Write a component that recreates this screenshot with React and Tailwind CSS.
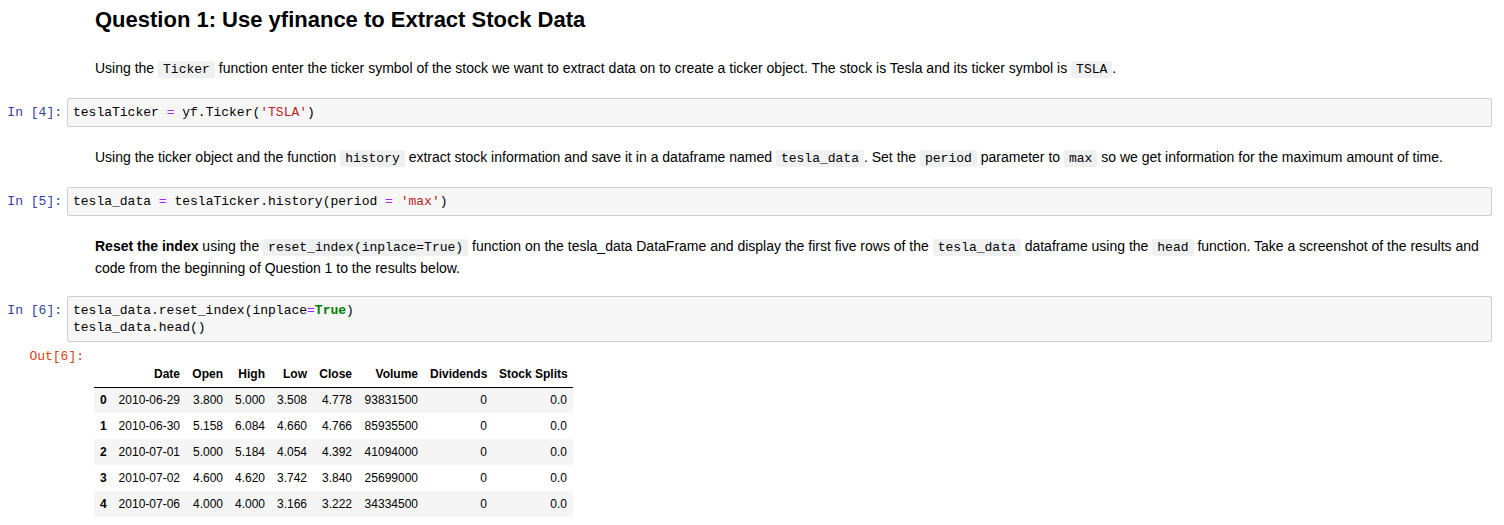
import React from "react";

const mono = "font-['Liberation_Mono','DejaVu_Sans_Mono',monospace]";

// inline code chip used inside markdown text
function Code({ children }) {
  return (
    <code className={`${mono} text-[13px] bg-[#eff0f1] px-[5px] py-[1px] rounded-[2px]`}>
      {children}
    </code>
  );
}

function CodeCell({ n, children }) {
  return (
    <div className="flex items-start">
      <div className={`${mono} w-[67px] shrink-0 pr-[5px] pt-[6px] text-right text-[13px] leading-[17px] text-[#303f9f]`}>
        In&nbsp;[{n}]:
      </div>
      <div className="w-[1425px] border border-[#cfcfcf] rounded-[2px] bg-[#f7f7f7] px-[5px] py-[5px]">
        <pre className={`${mono} text-[13px] leading-[17px] text-black`}>{children}</pre>
      </div>
    </div>
  );
}

const Op = ({ children }) => <span className="text-[#aa22ff]">{children}</span>;
const Str = ({ children }) => <span className="text-[#ba2121]">{children}</span>;
const Kw = ({ children }) => <span className="text-[#008000] font-bold">{children}</span>;

const rows = [
  ["2010-06-29", "3.800", "5.000", "3.508", "4.778", "93831500", "0", "0.0"],
  ["2010-06-30", "5.158", "6.084", "4.660", "4.766", "85935500", "0", "0.0"],
  ["2010-07-01", "5.000", "5.184", "4.054", "4.392", "41094000", "0", "0.0"],
  ["2010-07-02", "4.600", "4.620", "3.742", "3.840", "25699000", "0", "0.0"],
  ["2010-07-06", "4.000", "4.000", "3.166", "3.222", "34334500", "0", "0.0"],
];

const headers = ["Date", "Open", "High", "Low", "Close", "Volume", "Dividends", "Stock Splits"];

export default function App() {
  return (
    <div className="w-[1504px] h-[525px] overflow-hidden bg-white text-black text-[14px] font-['Liberation_Sans',Arial,sans-serif]">
      {/* Markdown heading */}
      <div className="pl-[95px] pt-[7px]">
        <h2 className="text-[22px] leading-[26px] font-bold">Question 1: Use yfinance to Extract Stock Data</h2>
      </div>

      <p className="pl-[95px] mt-[25px] leading-[20px]">
        Using the <Code>Ticker</Code> function enter the ticker symbol of the stock we want to extract data on to create a
        ticker object. The stock is Tesla and its ticker symbol is <Code>TSLA</Code>.
      </p>

      <div className="mt-[18px]">
        <CodeCell n={4}>
          teslaTicker <Op>=</Op> yf.Ticker(<Str>'TSLA'</Str>)
        </CodeCell>
      </div>

      <p className="pl-[95px] mt-[20px] leading-[20px]">
        Using the ticker object and the function <Code>history</Code> extract stock information and save it in a dataframe
        named <Code>tesla_data</Code>. Set the <Code>period</Code> parameter to <Code>max</Code> so we get information for
        the maximum amount of time.
      </p>

      <div className="mt-[18px]">
        <CodeCell n={5}>
          tesla_data <Op>=</Op> teslaTicker.history(period <Op>=</Op> <Str>'max'</Str>)
        </CodeCell>
      </div>

      <p className="pl-[95px] mt-[20px] leading-[21px]">
        <b>Reset the index</b> using the <Code>reset_index(inplace=True)</Code> function on the tesla_data DataFrame and
        display the first five rows of the <Code>tesla_data</Code> dataframe using the <Code>head</Code> function. Take a
        screenshot of the results and
        <br />
        code from the beginning of Question 1 to the results below.
      </p>

      <div className="mt-[17px]">
        <CodeCell n={6}>
          tesla_data.reset_index(inplace<Op>=</Op><Kw>True</Kw>)
          {"\n"}tesla_data.head()
        </CodeCell>
      </div>

      {/* Output area */}
      <div className="flex items-start mt-[4px]">
        <div className={`${mono} w-[84px] shrink-0 pt-[2px] text-right text-[13px] leading-[17px] text-[#d84315]`}>
          Out[6]:
        </div>
        <div className="pl-[10px] pt-[15px]">
          <table className="table-fixed border-collapse text-[12px] w-[479px]">
            <colgroup>
              <col className="w-[18px]" />
              <col className="w-[74px]" />
              <col className="w-[43px]" />
              <col className="w-[42px]" />
              <col className="w-[42px]" />
              <col className="w-[45px]" />
              <col className="w-[66px]" />
              <col className="w-[69px]" />
              <col className="w-[80px]" />
            </colgroup>
            <thead className="border-b border-black">
              <tr>
                <th className="px-[6px] h-[26px]"></th>
                {headers.map((h) => (
                  <th key={h} className="px-[6px] h-[26px] text-right font-bold whitespace-nowrap">
                    {h}
                  </th>
                ))}
              </tr>
            </thead>
            <tbody>
              {rows.map((r, i) => (
                <tr key={i} className={i % 2 === 0 ? "bg-[#f5f5f5]" : "bg-white"}>
                  <th className="px-[6px] h-[26px] text-right font-bold">{i}</th>
                  {r.map((c, j) => (
                    <td key={j} className="px-[6px] h-[26px] text-right whitespace-nowrap">
                      {c}
                    </td>
                  ))}
                </tr>
              ))}
            </tbody>
          </table>
        </div>
      </div>
    </div>
  );
}
